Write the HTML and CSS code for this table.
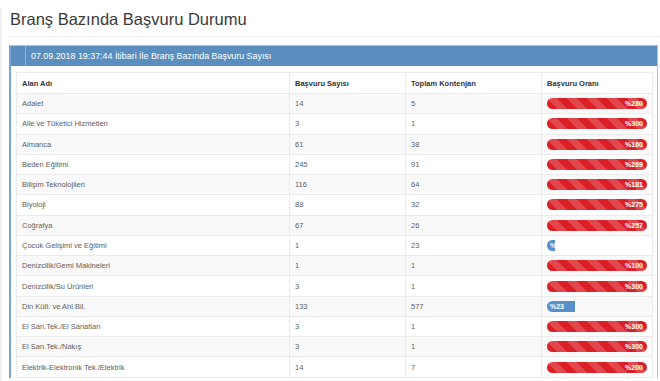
FILE: index.html
```html
<!DOCTYPE html>
<html lang="tr">
<head>
  <meta charset="UTF-8" />
  <title>Branş Bazında Başvuru Durumu</title>
  <link rel="stylesheet" href="styles.css">
</head>
<body>
  <div class="page">
    <h1 class="page-title">Branş Bazında Başvuru Durumu</h1>
    <hr class="page-rule" />

    <div class="panel">
      <div class="panel-heading">
        <span class="panel-title">07.09.2018 19:37:44 İtibari İle Branş Bazında Başvuru Sayısı</span>
      </div>
      <div class="panel-body">
        <table class="report-table">
          <thead>
            <tr>
              <th class="col-name">Alan Adı</th>
              <th class="col-count">Başvuru Sayısı</th>
              <th class="col-quota">Toplam Kontenjan</th>
              <th class="col-rate">Başvuru Oranı</th>
            </tr>
          </thead>
          <tbody>
            <tr><td>Adalet</td><td>14</td><td>5</td><td><div class="progress"><div class="bar bar-danger" style="width: 100%">%280</div></div></td></tr>
            <tr><td>Aile ve Tüketici Hizmetleri</td><td>3</td><td>1</td><td><div class="progress"><div class="bar bar-danger" style="width: 100%">%300</div></div></td></tr>
            <tr><td>Almanca</td><td>61</td><td>38</td><td><div class="progress"><div class="bar bar-danger" style="width: 100%">%160</div></div></td></tr>
            <tr><td>Beden Eğitimi</td><td>245</td><td>91</td><td><div class="progress"><div class="bar bar-danger" style="width: 100%">%269</div></div></td></tr>
            <tr><td>Bilişim Teknolojileri</td><td>116</td><td>64</td><td><div class="progress"><div class="bar bar-danger" style="width: 100%">%181</div></div></td></tr>
            <tr><td>Biyoloji</td><td>88</td><td>32</td><td><div class="progress"><div class="bar bar-danger" style="width: 100%">%275</div></div></td></tr>
            <tr><td>Coğrafya</td><td>67</td><td>26</td><td><div class="progress"><div class="bar bar-danger" style="width: 100%">%257</div></div></td></tr>
            <tr><td>Çocuk Gelişimi ve Eğitimi</td><td>1</td><td>23</td><td><div class="progress"><div class="bar bar-info" style="width: 8%">%</div></div></td></tr>
            <tr><td>Denizcilik/Gemi Makineleri</td><td>1</td><td>1</td><td><div class="progress"><div class="bar bar-danger" style="width: 100%">%100</div></div></td></tr>
            <tr><td>Denizcilik/Su Ürünleri</td><td>3</td><td>1</td><td><div class="progress"><div class="bar bar-danger" style="width: 100%">%300</div></div></td></tr>
            <tr><td>Din Kült. ve Ahl.Bil.</td><td>133</td><td>577</td><td><div class="progress"><div class="bar bar-info" style="width: 28%">%23</div></div></td></tr>
            <tr><td>El San.Tek./El Sanatları</td><td>3</td><td>1</td><td><div class="progress"><div class="bar bar-danger" style="width: 100%">%300</div></div></td></tr>
            <tr><td>El San.Tek./Nakış</td><td>3</td><td>1</td><td><div class="progress"><div class="bar bar-danger" style="width: 100%">%300</div></div></td></tr>
            <tr><td>Elektrik-Elektronik Tek./Elektrik</td><td>14</td><td>7</td><td><div class="progress"><div class="bar bar-danger" style="width: 100%">%200</div></div></td></tr>
          </tbody>
        </table>
      </div>
    </div>
  </div>
</body>
</html>
```

FILE: styles.css
```css
* {
  box-sizing: border-box;
}

html, body {
  margin: 0;
  padding: 0;
  background: #ffffff;
  font-family: "Liberation Sans", Arial, sans-serif;
  color: #333333;
  height: 100%;
  overflow: hidden;
}

.page {
  border-left: 2px solid #f1f1f1;
  padding: 0 2px 0 7px;
  min-height: 100%;
}

.page-title {
  margin: 9px 0 0 1px;
  font-size: 16.5px;
  line-height: 20px;
  font-weight: normal;
  color: #3a3a3a;
}

.page-rule {
  border: none;
  height: 1px;
  background-color: #eeeeee;
  margin: 7px -2px 8px 1px;
}

.panel {
  border: 1px solid #a9c5e2;
  border-left: 2px solid #79a5d3;
  border-bottom: none;
}

.panel-heading {
  display: flex;
  align-items: stretch;
  height: 20px;
  background-color: #5a8ebf;
  padding-left: 14px;
}

.panel-title {
  display: flex;
  align-items: center;
  border-left: 1px solid rgba(255, 255, 255, 0.35);
  padding-left: 5px;
  font-size: 8.9px;
  color: #ffffff;
}

.panel-body {
  padding: 6px 4px 0 5px;
}

.report-table {
  width: 100%;
  border-collapse: collapse;
  border: 1px solid #e8e8e8;
  table-layout: fixed;
  font-size: 7.5px;
}

.report-table th,
.report-table td {
  border: 1px solid #ebebeb;
  padding: 0 5px;
  text-align: left;
  vertical-align: middle;
  white-space: nowrap;
}

.report-table th {
  height: 21px;
  font-weight: bold;
  color: #333333;
}

.report-table td {
  height: 20.27px;
  color: #5e5e5e;
}

.report-table tbody tr:nth-child(odd) {
  background-color: #f9f9f9;
}

.col-name { width: 273px; }
.col-count { width: 116px; }
.col-quota { width: 136px; }

.progress {
  height: 11px;
  border-radius: 6px;
  overflow: hidden;
}

.bar {
  height: 100%;
  font-size: 7px;
  font-weight: bold;
  line-height: 11px;
  color: #ffffff;
  white-space: nowrap;
  overflow: hidden;
}

.bar-danger {
  background-color: #dc1f26;
  background-image: linear-gradient(45deg,
    rgba(255, 255, 255, 0.18) 25%, transparent 25%,
    transparent 50%, rgba(255, 255, 255, 0.18) 50%,
    rgba(255, 255, 255, 0.18) 75%, transparent 75%, transparent);
  background-size: 20px 20px;
  text-align: right;
  padding-right: 4px;
}

.bar-info {
  background-color: #5590cb;
  padding-left: 3px;
}
```
